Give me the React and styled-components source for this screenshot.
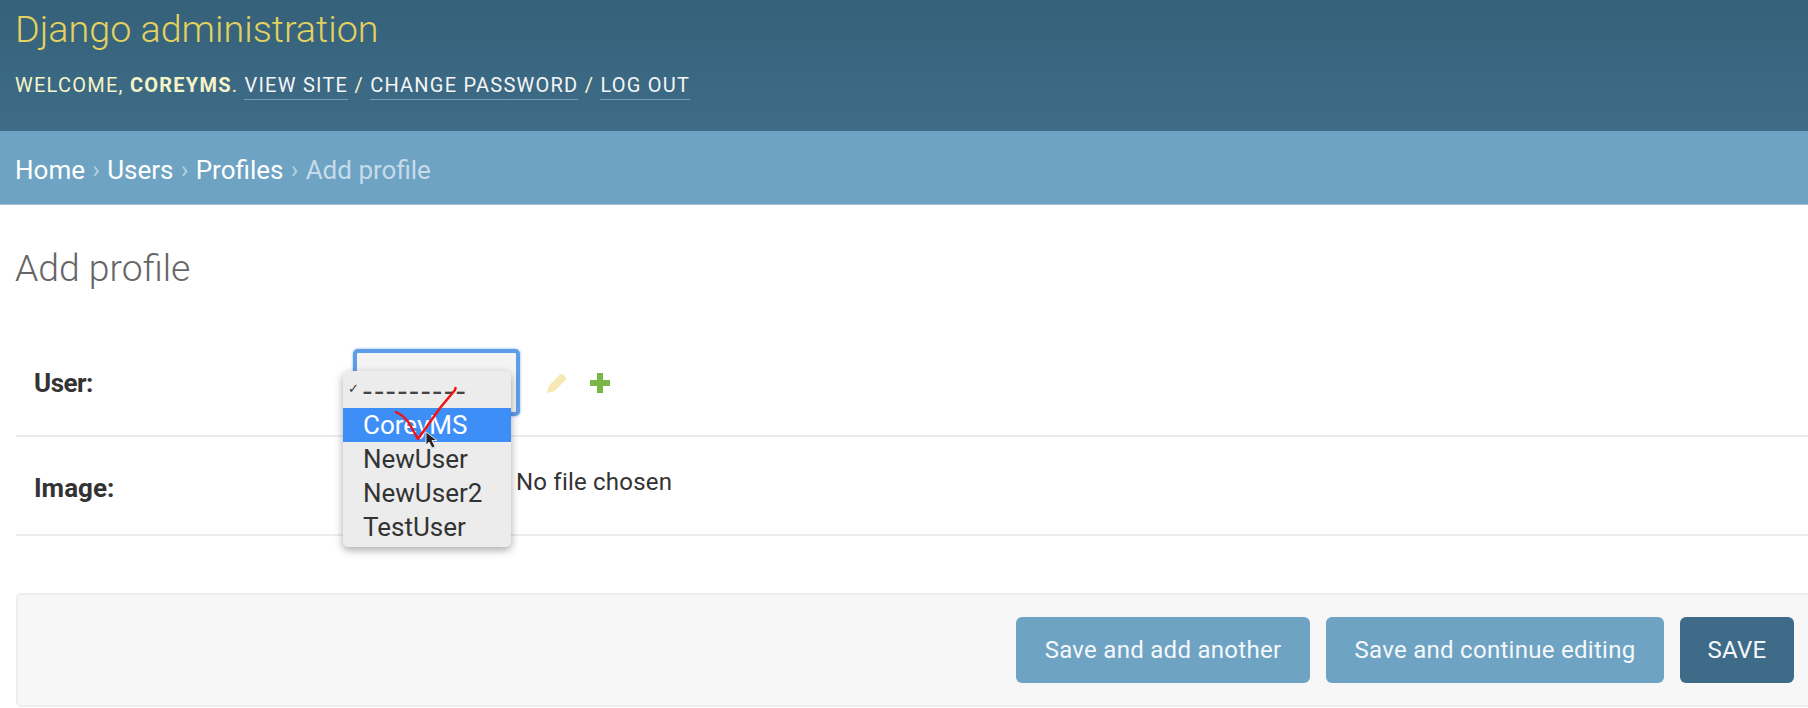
import React from "react";
import styled, { createGlobalStyle } from "styled-components";

const Global = createGlobalStyle`
  html, body { margin: 0; padding: 0; background: #fff; overflow: hidden; }
  body { font-family: Roboto, "Liberation Sans", sans-serif; color: #333; }
`;
const Page = styled.div`width: 1808px; height: 708px; overflow: hidden;`;
const Header = styled.header`
  height: 131px; box-sizing: border-box; padding: 7px 16px 0 15px;
  background: linear-gradient(#356179, #3e6c88);
`;
const Brand = styled.h1`
  margin: 0; font-size: 37.7px; line-height: 44px; font-weight: 300; color: #e3d25f;
`;
const Tools = styled.div`
  margin-top: 21px; font-size: 20px; line-height: 26px; letter-spacing: 1.24px; color: #f5f5c8; text-transform: uppercase;
  font-weight: 400;
`;
const ToolLink = styled.a`
  color: #f5f5f5; border-bottom: 1.5px solid #6f9fbd; padding-bottom: 2px; display: inline-block; line-height: 24px;
`;
const Crumbs = styled.nav`
  height: 74px; box-sizing: border-box; background: #6ea3c3; padding: 4px 15px 0; display: flex; align-items: center;
  font-size: 26px; font-weight: 400; color: #c5dcea; gap: 7.500px; border-bottom: 1px solid #9cc0d6;
`;
const CrumbLink = styled.a`color: #fff;`;
const Sep = styled.span`font-size: 24px; color: #b9d3e3;`;
const Main = styled.main`padding: 0 0 0 16px;`;
const Title = styled.h2`
  margin: 0 0 0 -1px; padding: 40px 0 39px; font-size: 37.300px; line-height: 46px; font-weight: 300; color: #666;
`;
const Row = styled.div`
  position: relative; display: flex; align-items: center; box-sizing: border-box; height: ${p => p.$h}px;
  padding-left: 18px; border-bottom: 2px solid #ececec;
`;
const Label = styled.label`
  width: 319px; font-size: 26px; font-weight: 700; color: #333; position: relative; top: ${p => p.$shift || 0}px;
  letter-spacing: ${p => p.$spacing || 0}px;
`;
const Select = styled.div`
  width: 167px; height: 67px; box-sizing: border-box; background: #f4f4f4; border: 4px solid #5f9de8;
  border-radius: 5px; box-shadow: 0 0 3px #7fb2ee;
`;
const Icons = styled.div`display: flex; align-items: center; gap: 23px; margin-left: 27px;`;
const Menu = styled.div`
  position: absolute; left: 327px; top: 41px; width: 168px; height: 176px; box-sizing: border-box; padding-top: 3px;
  background: #ececec; border-radius: 5px; box-shadow: 0 3px 9px rgba(0,0,0,.35); z-index: 3;
`;
const Option = styled.div`
  position: relative; height: 34px; padding-left: 20px; font-size: 26px; line-height: 34px; color: ${p => p.$active ? "#fff" : "#333"};
  background: ${p => p.$active ? "#3d8ff7" : "transparent"};
`;
const Dashes = styled.span`font-size: 32px; letter-spacing: 2.800px; color: #444;`;
const Tick = styled.span`position: absolute; left: 5px; top: -2px; font-size: 13px; color: #333;`;
const Mark = styled.svg`position: absolute; left: 374px; top: 50px; z-index: 4; overflow: visible;`;
const FileText = styled.div`margin-left: 163px; font-size: 24px; color: #333; position: relative; top: -4px; letter-spacing: 0.2px;`;
const Submit = styled.div`
  margin-top: 57px; height: 114px; box-sizing: border-box; background: #f7f7f7; border: 2px solid #eeeeee; border-right: 0;
  border-radius: 5px 0 0 5px; display: flex; justify-content: flex-end; align-items: center; gap: 16px; padding: 0 14px 0 0;
`;
const Button = styled.button`
  height: 66px; width: ${p => p.$w}px; border: 0; border-radius: 6px; font: 400 24px Roboto, sans-serif; color: #f4f8fb; letter-spacing: .28px; padding: 0;
  background: ${p => p.$primary ? "#3e6c88" : "#6ea3c3"}; flex: none;
`;

export default function App() {
  return (
    <Page>
      <Global />
      <Header>
        <Brand>Django administration</Brand>
        <Tools>
          Welcome, <b>coreyms</b>. <ToolLink>View site</ToolLink> / <ToolLink>Change password</ToolLink> / <ToolLink>Log out</ToolLink>
        </Tools>
      </Header>
      <Crumbs>
        <CrumbLink>Home</CrumbLink><Sep>›</Sep><CrumbLink>Users</CrumbLink><Sep>›</Sep><CrumbLink>Profiles</CrumbLink><Sep>›</Sep><span>Add profile</span>
      </Crumbs>
      <Main>
        <Title>Add profile</Title>
        <Row $h={107}>
          <Label $spacing={-0.5}>User:</Label>
          <Select />
          <Icons>
            <svg width="20" height="20" viewBox="0 0 20 20" aria-hidden="true"><path d="M0 20l1.500-7L13 1.500a2 2 0 0 1 3 0l2.500 2.500a2 2 0 0 1 0 3L7 18.500z" fill="#f6e9b4" /></svg>
            <svg width="20" height="20" viewBox="0 0 20 20" aria-hidden="true"><path d="M7 0h6v7h7v6h-7v7H7v-7H0V7h7z" fill="#7ab648" /></svg>
          </Icons>
          <Menu>
            <Option><Tick>✓</Tick><Dashes>---------</Dashes></Option>
            <Option $active>CoreyMS</Option>
            <Option>NewUser</Option>
            <Option>NewUser2</Option>
            <Option>TestUser</Option>
          </Menu>
          <Mark width="70" height="70" viewBox="0 0 70 70" aria-hidden="true">
            <path d="M6 32c4 2 10 5 14 13l8 14L50 28 65 10l.5-2" fill="none" stroke="#f01414" strokeWidth="2.500" strokeLinejoin="round" strokeLinecap="round" />
            <path d="M36 52v13l3-3 3 6 3-1.500-3-6h5z" fill="#222" stroke="#ddd" strokeWidth="1" />
          </Mark>
        </Row>
        <Row $h={99}>
          <Label $shift={2}>Image:</Label>
          <FileText>No file chosen</FileText>
        </Row>
        <Submit>
          <Button $w={294}>Save and add another</Button>
          <Button $w={338}>Save and continue editing</Button>
          <Button $w={114} $primary>SAVE</Button>
        </Submit>
      </Main>
    </Page>
  );
}
